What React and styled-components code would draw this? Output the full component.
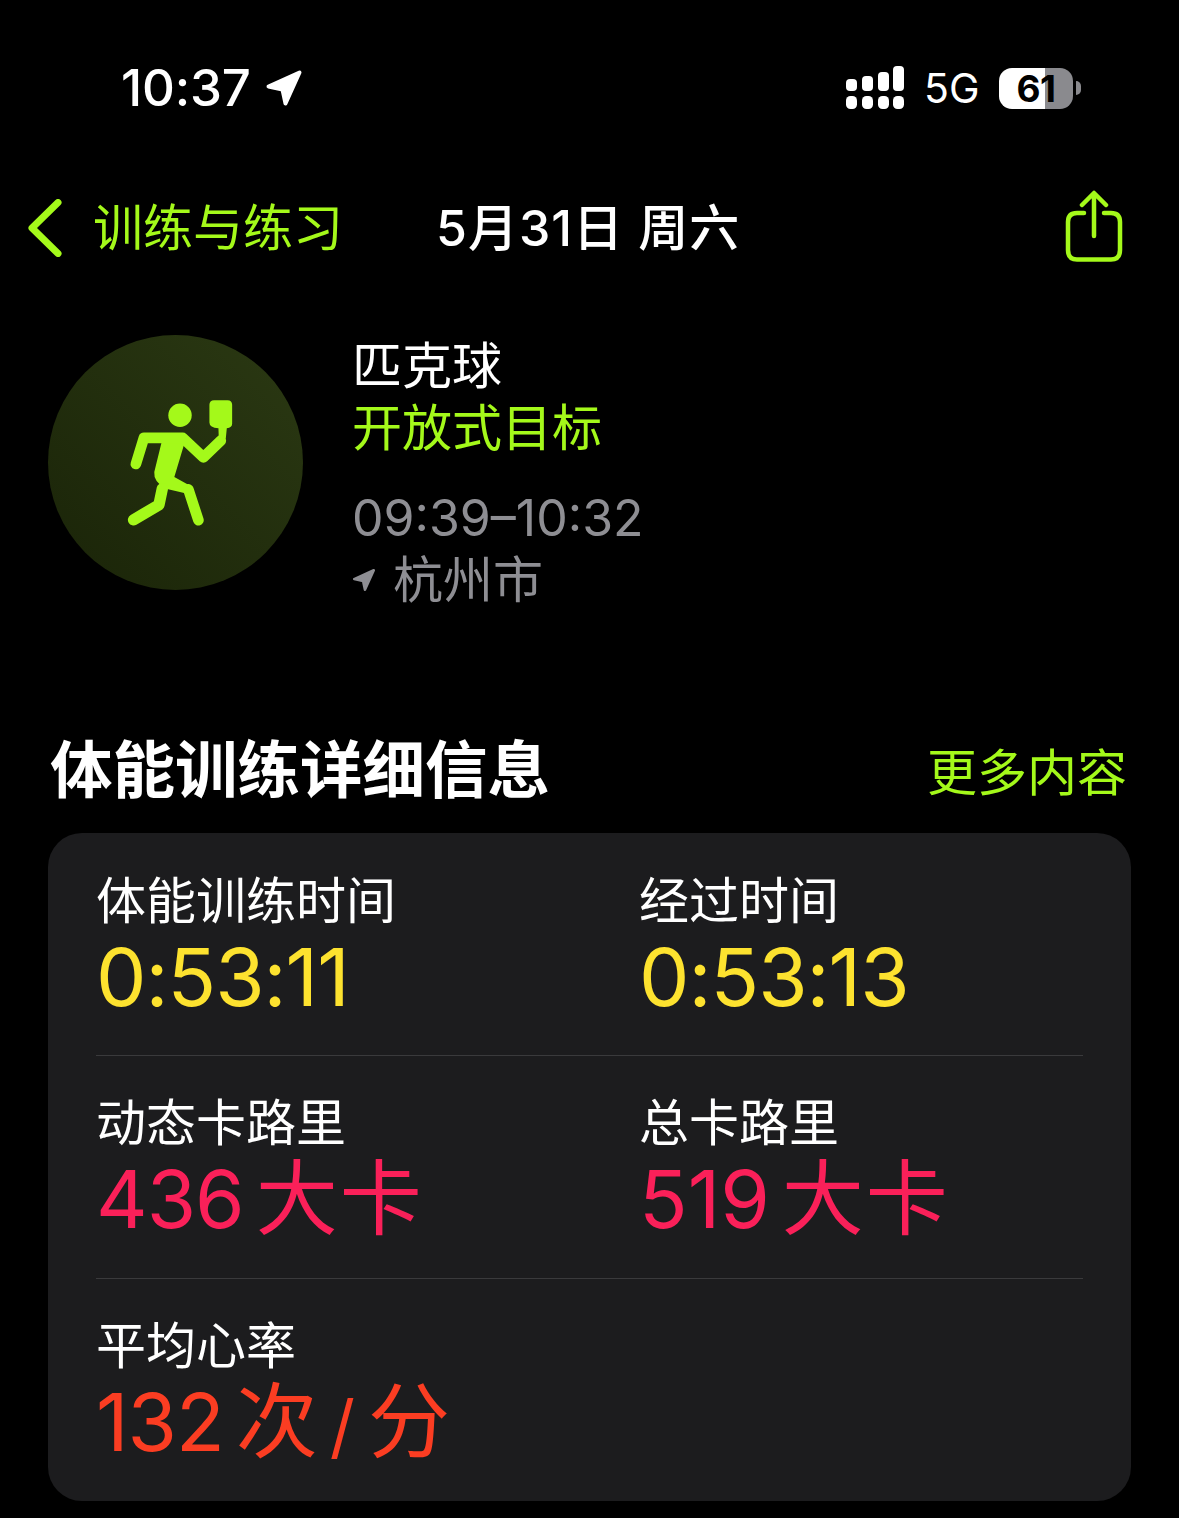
import React from "react";
import styled, { createGlobalStyle } from "styled-components";

const LIME = "#a4f91a";
const GRAY = "#8e8e93";
const SANS = `Inter, "Noto Sans CJK SC", sans-serif`;

const Global = createGlobalStyle`
  html, body { margin: 0; padding: 0; background: #000; }
  body { font-family: ${SANS}; color: #fff; }
  * { box-sizing: border-box; }
`;

const Page = styled.div`
  width: 1179px;
  height: 1518px;
  overflow: hidden;
  background: #000;
  display: flex;
  flex-direction: column;
`;

const StatusBar = styled.div`
  height: 64px;
  margin-top: 56px;
  padding: 0 98px 0 121px;
  display: flex;
  align-items: center;
  justify-content: space-between;
`;
const StatusLeft = styled.div`
  display: flex;
  align-items: center;
  gap: 14px;
`;
const Clock = styled.span`
  font-size: 51px;
  font-weight: 500;
  letter-spacing: -0.2px;
  line-height: 64px;
`;
const StatusRight = styled.div`
  display: flex;
  align-items: center;
  gap: 20px;
`;
const Network = styled.span`
  font-size: 41px;
  font-weight: 400;
  line-height: 64px;
  width: 55px;
  margin-left: -1px;
`;
const BatteryWrap = styled.div`
  display: flex;
  align-items: center;
  gap: 3px;
`;
const Battery = styled.div`
  width: 74px;
  height: 41px;
  border-radius: 13px;
  display: flex;
  align-items: center;
  justify-content: center;
  color: #000;
  font-size: 37px;
  font-weight: 700;
  letter-spacing: -0.5px;
  background: linear-gradient(to right, #fff 0 62%, #8a8a8e 62% 100%);
`;
const BatteryTip = styled.div`
  width: 5px;
  height: 14px;
  background: #8a8a8e;
  border-radius: 0 7px 7px 0;
`;

const NavBar = styled.div`
  height: 80px;
  margin-top: 68px;
  padding: 0 56px 0 28px;
  display: flex;
  align-items: center;
`;
const BackLink = styled.div`
  display: flex;
  align-items: center;
  gap: 31px;
  color: ${LIME};
  font-size: 50px;
  line-height: 60px;
  width: 408px;
`;
const NavTitle = styled.div`
  flex: 1;
  font-size: 50px;
  font-weight: 500;
  letter-spacing: 1px;
  line-height: 60px;
  white-space: pre;
`;

const Summary = styled.section`
  margin: 67px 0 0 48px;
  display: flex;
  gap: 49px;
`;
const Badge = styled.div`
  width: 255px;
  height: 255px;
  border-radius: 50%;
  background: linear-gradient(45deg, #1a2408, #2b3913);
  flex: none;
`;
const SummaryText = styled.div`
  display: flex;
  flex-direction: column;
`;
const SummaryLine = styled.div`
  font-size: 50px;
  line-height: 62px;
  color: ${(p) => p.$color || "#fff"};
  margin-top: ${(p) => p.$gap || 0}px;
  display: flex;
  align-items: center;
  gap: ${(p) => (p.$icon ? 17 : 0)}px;
`;

const SectionHead = styled.div`
  margin-top: 124px;
  padding: 0 52px 0 50px;
  height: 70px;
  display: flex;
  align-items: center;
  justify-content: space-between;
`;
const SectionTitle = styled.h2`
  margin: 0;
  font-size: 62.5px;
  font-weight: 700;
  line-height: 70px;
`;
const SectionLink = styled.span`
  font-size: 50px;
  color: ${LIME};
  line-height: 70px;
  margin-top: 6px;
`;

const Card = styled.div`
  margin: 28px 48px 0;
  height: 668px;
  border-radius: 34px;
  background: #1c1c1e;
  padding: 0 48px;
`;
const Row = styled.div`
  height: ${(p) => p.$h}px;
  display: grid;
  grid-template-columns: 543px 1fr;
  border-bottom: ${(p) => (p.$last ? "none" : "1px solid #3a3a3c")};
  padding-top: ${(p) => p.$top}px;
`;
const Metric = styled.div`
  display: flex;
  flex-direction: column;
`;
const MetricLabel = styled.div`
  font-size: 50px;
  line-height: 60px;
  color: #fff;
`;
const MetricValue = styled.div`
  font-size: 80px;
  line-height: 92px;
  font-weight: 400;
  letter-spacing: ${(p) => p.$spacing ?? -1}px;
  color: ${(p) => p.$color};
  white-space: nowrap;
`;
const Unit = styled.span`
  font-size: 82px;
  letter-spacing: 2px;
  margin-left: 12px;
`;
const Slash = styled.span`
  margin: 0 14px 0 10px;
  font-size: 70px;
`;
const UnitEnd = styled.span`
  font-size: 82px;
`;

const SvgIcon = styled.svg`
  display: block;
  flex: none;
`;
const ShareIcon = styled(SvgIcon)`
  margin-bottom: 4px;
`;

const Arrow = ({ size, color }) => (
  <SvgIcon width={size} height={size} viewBox="0 0 38 38">
    <path
      d="M3.5 17.5 L34.5 3.5 L20.5 34.5 L17.5 20.5 Z"
      fill={color}
      stroke={color}
      strokeWidth="4"
      strokeLinejoin="round"
    />
  </SvgIcon>
);

const Signal = () => (
  <SvgIcon width={60} height={44} viewBox="0 0 60 44" fill="#fff">
    <rect x="1" y="13" width="11" height="12" rx="4" />
    <rect x="17" y="10" width="11" height="15" rx="4" />
    <rect x="33" y="6" width="11" height="19" rx="4" />
    <rect x="48" y="0" width="11" height="25" rx="4" />
    <rect x="1" y="30" width="11" height="13" rx="4.5" />
    <rect x="17" y="30" width="11" height="13" rx="4.5" />
    <rect x="33" y="30" width="11" height="13" rx="4.5" />
    <rect x="48" y="30" width="11" height="13" rx="4.5" />
  </SvgIcon>
);

const Chevron = () => (
  <SvgIcon width={34} height={58} viewBox="0 0 34 58">
    <path d="M30 3.5 L4 29 L30 54.5" fill="none" stroke={LIME} strokeWidth="7" strokeLinecap="round" strokeLinejoin="round" />
  </SvgIcon>
);

const Share = () => (
  <ShareIcon width={58} height={72} viewBox="0 0 58 72" fill="none" stroke={LIME} strokeWidth="4.5" strokeLinecap="round" strokeLinejoin="round">
    <path d="M19 23 H12 Q3 23 3 32 V60 Q3 69.5 12 69.5 H46 Q55 69.5 55 60 V32 Q55 23 46 23 H39" />
    <path d="M29 46 V4 M17 15 L29 3 L41 15" />
  </ShareIcon>
);

const Player = () => (
  <SvgIcon width={255} height={255} viewBox="25 30 763 763">
    <circle cx="420" cy="270" r="35" fill={LIME} />
    <path d="M522 225 H562 Q576 225 576 239 V295 Q576 308 560 309 L557 340 L536 340 L535 309 Q508 308 508 292 V239 Q508 225 522 225 Z" fill={LIME} />
    <path d="M368 338 L436 345 L403 455 L445 478 L442 505 L378 490 Q340 470 343 440 Z" fill={LIME} />
    <g fill="none" stroke={LIME} strokeLinecap="round" strokeLinejoin="round">
      <path d="M288 416 L312 338 L428 338 L490 396 L542 346" strokeWidth="32" />
      <path d="M445 492 L475 584" strokeWidth="32" />
      <path d="M367 490 L357 538 L281 583" strokeWidth="34" />
    </g>
  </SvgIcon>
);

const MetricBlock = ({ label, value, unit, color, spacing }) => (
  <Metric>
    <MetricLabel>{label}</MetricLabel>
    <MetricValue $color={color} $spacing={spacing}>
      {value}
      {unit}
    </MetricValue>
  </Metric>
);

export default function App() {
  return (
    <Page>
      <Global />
      <StatusBar>
        <StatusLeft>
          <Clock>10:37</Clock>
          <Arrow size={38} color="#fff" />
        </StatusLeft>
        <StatusRight>
          <Signal />
          <Network>5G</Network>
          <BatteryWrap>
            <Battery>61</Battery>
            <BatteryTip />
          </BatteryWrap>
        </StatusRight>
      </StatusBar>

      <NavBar>
        <BackLink>
          <Chevron />
          <span>训练与练习</span>
        </BackLink>
        <NavTitle>5月31日 周六</NavTitle>
        <Share />
      </NavBar>

      <Summary>
        <Badge>
          <Player />
        </Badge>
        <SummaryText>
          <SummaryLine>匹克球</SummaryLine>
          <SummaryLine $color={LIME}>开放式目标</SummaryLine>
          <SummaryLine $color={GRAY} $gap={28}>09:39–10:32</SummaryLine>
          <SummaryLine $color={GRAY} $icon>
            <Arrow size={24} color={GRAY} />
            杭州市
          </SummaryLine>
        </SummaryText>
      </Summary>

      <SectionHead>
        <SectionTitle>体能训练详细信息</SectionTitle>
        <SectionLink>更多内容</SectionLink>
      </SectionHead>

      <Card>
        <Row $h={223} $top={38}>
          <MetricBlock label="体能训练时间" value="0:53:11" color="#fde22f" />
          <MetricBlock label="经过时间" value="0:53:13" color="#fde22f" />
        </Row>
        <Row $h={223} $top={37}>
          <MetricBlock label="动态卡路里" value="436" unit={<Unit>大卡</Unit>} color="#fa2059" />
          <MetricBlock label="总卡路里" value="519" spacing={0} unit={<Unit>大卡</Unit>} color="#fa2059" />
        </Row>
        <Row $h={222} $top={37} $last>
          <MetricBlock
            label="平均心率"
            value="132"
            color="#fb3d22"
            unit={
              <>
                <Unit>次</Unit>
                <Slash>/</Slash>
                <UnitEnd>分</UnitEnd>
              </>
            }
          />
        </Row>
      </Card>
    </Page>
  );
}
